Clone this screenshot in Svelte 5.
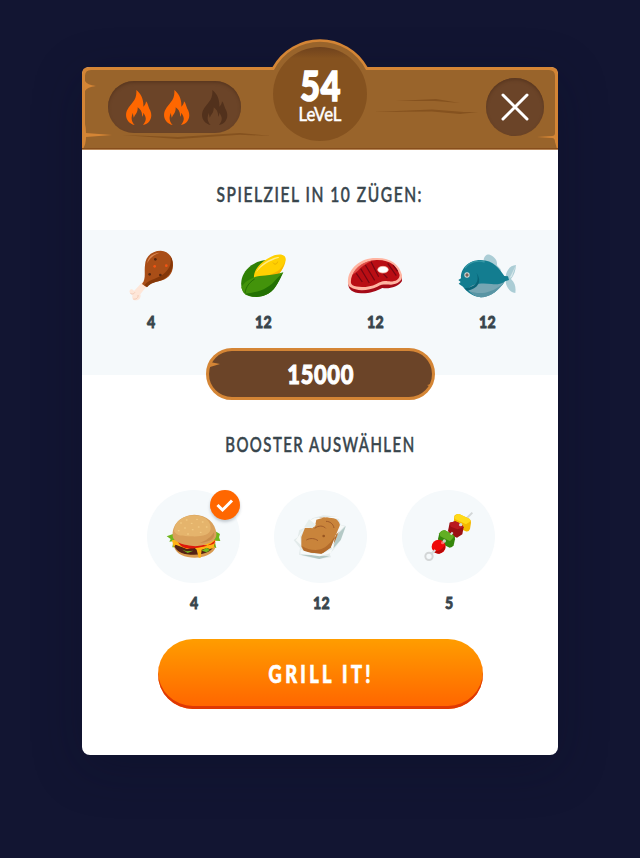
<script>
  const goals = [
    { icon: 'drumstick', box: '24 30 198 180', count: 4 },
    { icon: 'corn', box: '360 30 198 180', count: 12 },
    { icon: 'steak', box: '21 30 198 180', count: 12 },
    { icon: 'fish', box: '357 30 198 180', count: 12 }
  ];
  const boosters = [
    { icon: 'burger', box: '20 28 279 279', count: 4, selected: true },
    { icon: 'potato', box: '28 28 279 279', count: 12 },
    { icon: 'skewer', box: '20 28 279 279', count: 5 }
  ];
  const flames = [true, true, false];
</script>

{#snippet food(name)}
  {#if name === 'drumstick'}
    <path d="M98 140L72 168C66 158 56 164 59 172C60 178 66 178 68 179C64 188 69 197 78 196C88 196 94 188 91 178L110 154Z" fill="#fee6d8" />
    <path d="M61 174C65 180 72 176 75 172M70 192C78 194 86 188 84 180" fill="none" stroke="#f3cbb7" stroke-width="3" />
    <path d="M105 91C106 64 126 47 152 47C176 48 190 68 189 91C189 119 171 135 145 139C126 143 119 145 110 157L96 147C109 131 102 111 105 91Z" fill="#a94e17" />
    <path d="M181 62C196 88 187 118 158 134C142 141 123 142 112 156L103 151C119 130 145 133 164 114C181 98 185 82 181 62Z" fill="#853708" />
    <path d="M112 85C113 66 130 53 149 53C127 61 118 73 112 85Z" fill="#d98550" />
    <circle cx="136" cy="73" r="4" fill="#58280f" /><circle cx="119" cy="118" r="4" fill="#58280f" /><circle cx="151" cy="120" r="4" fill="#58280f" />
    <circle cx="134" cy="94" r="4" fill="#f45412" /><circle cx="169" cy="92" r="4" fill="#f45412" />
  {:else if name === 'corn'}
    <path d="M399 170C386 143 397 111 424 91C440 80 456 76 472 75L432 145L409 181Z" fill="#2f8004" />
    <path d="M432 130C429 102 459 74 493 61C512 55 529 59 527 75C525 96 507 122 488 134L432 139Z" fill="#ffd001" />
    <path d="M527 69C523 96 504 112 476 121C460 124 445 128 432 133L443 146L488 134C507 122 524 96 527 69Z" fill="#f9b200" />
    <path d="M439 112C445 94 469 76 493 68C506 64 510 66 505 69C480 77 454 91 439 112Z" fill="#ffec85" />
    <path d="M394 158C400 143 424 126 448 123C472 121 498 119 520 112C508 134 500 160 477 175C454 190 416 190 401 173Z" fill="#43930b" />
    <path d="M520 112C508 134 500 160 477 175C454 190 422 188 405 176C444 173 478 160 500 131Z" fill="#237103" />
    <path d="M405 174C408 155 418 142 434 132" fill="none" stroke="#246e04" stroke-width="3" />
    <path d="M489 83C495 91 501 87 503 80" stroke="#e8af00" stroke-width="3" fill="none" />
  {:else if name === 'steak'}
    <path d="M40 145C39 164 52 174 78 175C102 176 125 168 142 159C162 162 190 157 201 138L200 124L39 133Z" fill="#a50b18" />
    <path d="M39 134C42 101 75 69 122 69C166 67 193 88 201 120C203 138 188 147 168 149C149 149 142 147 127 155C100 168 64 169 47 157C39 151 38 145 39 134Z" fill="#ffb5a2" />
    <path d="M48 137C50 107 83 76 125 75C166 74 187 94 194 120C193 136 178 141 159 139C142 136 137 141 124 147C100 159 66 158 53 151C48 147 47 142 48 137Z" fill="#b90e14" />
    <path d="M64 115L82 141M77 101L103 144M91 90L119 136M108 80L131 125M158 85L184 122M145 116L157 129M174 90L188 109" stroke="#760712" stroke-width="3.5" />
    <path d="M53 119C62 94 88 79 111 77C92 85 77 96 69 107Z" fill="#e95c52" opacity=".8" />
    <ellipse cx="144" cy="104" rx="16" ry="10" fill="#fff" stroke="#f9b49f" stroke-width="2" />
  {:else if name === 'fish'}
    <path d="M446 75C447 63 456 57 464 59C479 65 488 76 486 91L497 103V116Z" fill="#abcdd5" />
    <path d="M512 124C515 103 527 91 543 90C542 107 537 121 528 132C541 144 543 158 541 174C523 172 513 153 512 140Z" fill="#abcdd5" />
    <path d="M523 130C529 119 535 105 543 90L531 125Z" fill="#d4e6e9" />
    <path d="M370 135L378 130C376 100 401 75 437 75C475 75 495 103 508 123L519 124L522 135L510 139C493 165 467 186 438 187C407 184 390 163 384 155L371 146L377 141Z" fill="#137d90" />
    <path d="M397 163C411 145 441 143 470 147C486 149 497 147 508 140C490 167 467 186 438 187C420 184 407 175 397 163Z" fill="#76a6b3" />
    <path d="M404 169C435 180 468 174 500 149C481 175 459 186 437 187C422 185 413 179 404 169Z" fill="#5995a4" />
    <path d="M425 114C434 140 423 156 389 160L396 167C430 161 442 140 425 114Z" fill="#086477" />
    <path d="M390 99C405 78 432 75 449 81" fill="none" stroke="#3597a5" stroke-width="4" />
    <circle cx="396" cy="120" r="8" fill="#d5dcda" /><circle cx="396" cy="120" r="5" fill="#776258" />
  {:else if name === 'burger'}
    <path d="M98 160L79 167L91 175L87 183L99 182L96 200L228 202L223 180L240 181L236 170L239 160L224 151Z" fill="#70b61c" />
    <path d="M101 198C112 242 212 242 226 199Z" fill="#d99b50" />
    <path d="M98 180C101 216 132 222 161 222C193 222 222 211 225 184Z" fill="#542215" />
    <path d="M95 178L100 200L106 192L126 200L141 206L160 199L169 207L175 231L181 231L184 207L200 202L208 205L220 202L226 178Z" fill="#ffb313" />
    <path d="M108 205L117 198L138 206L160 202L166 214L134 219Z" fill="#542215" />
    <path d="M113 183C121 203 145 206 166 202C184 200 211 195 225 177L222 188C210 195 200 195 187 192L126 188Z" fill="#df170a" />
    <path d="M126 207L139 212L159 210L142 217ZM184 210L199 201L209 208L199 215Z" fill="#70b61c" />
    <path d="M97 163C96 127 126 103 162 102C199 102 226 128 228 158C231 184 198 194 165 197C131 193 96 186 97 163Z" fill="#d9a05b" />
    <path d="M101 151C102 122 128 105 161 104C191 105 212 119 211 143C211 166 179 168 153 167C127 166 109 167 101 151Z" fill="#e5b46c" />
    <path d="M178 187C196 181 213 169 221 155C225 171 214 184 178 187Z" fill="#c88c4b" />
    <g fill="#f2ca84">
      {#each [[122,127],[139,118],[154,128],[170,116],[187,124],[199,139],[175,139],[157,147],[134,142],[115,150],[143,160],[181,155]] as [x, y]}
        <ellipse cx={x} cy={y} rx="3" ry="2" />
      {/each}
    </g>
  {:else if name === 'potato'}
    <path d="M145 112L176 104L221 108L228 132L244 136L229 177L209 204L195 220L199 230L164 235L133 230L103 222L106 202L87 178L99 170L104 148L117 143L132 123Z" fill="#e3ebeb" />
    <path d="M108 222L153 224L194 227L164 235ZM214 165L243 137L228 178L206 203Z" fill="#b4c9c6" />
    <path d="M150 117C164 109 189 105 209 113C226 119 232 141 220 158C217 171 207 188 198 199L172 219L119 214L110 198V169L121 141L149 137Z" fill="#c9843b" />
    <path d="M112 196C130 208 158 212 175 203C191 195 206 177 216 157C216 179 205 194 197 202L172 219L119 214Z" fill="#b36b2b" />
    <path d="M184 122C197 122 206 131 208 142M125 178C137 171 151 173 160 180M150 143C161 134 176 134 183 143" fill="none" stroke="#955125" stroke-width="2.5" />
    <circle cx="177" cy="166" r="4" fill="#995621" />
    <path d="M149 113L221 107L226 115L181 110L155 117L151 137L134 142L118 141L133 121Z" fill="#f8faf9" />
    <path d="M133 116L154 132L143 143L119 138Z" fill="#e6eeec" />
    <path d="M119 143L106 166L109 193L93 179ZM108 207L146 219L170 220L204 204L199 217L165 227L135 222L107 219ZM226 133L239 137L211 165L205 206L199 199Z" fill="#f7faf9" />
  {:else}
    <path d="M107 220L231 96" stroke="#d3d6d7" stroke-width="6" />
    <circle cx="101" cy="227" r="11" fill="none" stroke="#d3d6d7" stroke-width="6" />
    <path d="M177 105Q184 97 193 101L222 114Q228 119 227 126L224 145Q220 155 211 152L181 138Q174 135 175 128Z" fill="#f5b900" />
    <path d="M177 108Q184 97 193 101L222 114Q228 119 221 125L212 131L180 116Z" fill="#ffda18" />
    <path d="M163 126L180 122L198 130L205 140L201 161L185 171L167 164L158 151Z" fill="#9b1013" />
    <path d="M163 126L180 122L198 130L205 140L187 146L166 138Z" fill="#b91a20" />
    <path d="M132 158Q139 147 149 149L173 162Q180 167 179 176L175 194Q171 201 163 201L134 187Q127 182 128 174Z" fill="#35870c" />
    <path d="M132 158Q139 147 149 149L173 162Q178 166 172 173L164 182L135 167Z" fill="#62af24" />
    <circle cx="130" cy="198" r="21" fill="#ef0909" />
    <path d="M113 211Q134 216 149 194Q153 213 132 219Q119 219 113 211Z" fill="#b80908" />
    <circle cx="142" cy="186" r="5" fill="#ff6c67" />
    <circle cx="196" cy="132" r="5" fill="#d5d8d8" /><circle cx="147" cy="181" r="5" fill="#c6d1bd" />
    <path d="M111 217L120 208M166 162L172 155" stroke="#d9dddd" stroke-width="6" />
  {/if}
{/snippet}

<main>
  <section class="card">
    <header>
      <svg class="wood" viewBox="82 39 476 111" aria-hidden="true">
        <defs>
          <linearGradient id="rim" x1="0" y1="0" x2="0" y2="1"><stop offset="0" stop-color="#6f421d" /><stop offset=".12" stop-color="#85521f" /></linearGradient>
        </defs>
        <path d="M82 149.5V74Q82 67 89 67H272.5A54.5 54.5 0 0 1 367.5 67H551Q558 67 558 74V149.5Z" fill="#d48535" />
        <path d="M83 149Q86 144 86 137L112 135L86 133Q86 128 85 124V91Q87 87 96 86Q87 85 85 81V76Q85 70 91 70H274A51.5 51.5 0 0 1 366 70H549Q555 70 555 76V133Q555 136 552 136L537 137L552 138Q555 138 555 142L557 149Z" fill="#99642b" />
        <path d="M82 148.8H558" stroke="#874e1c" stroke-width="1.6" />
        <path d="M122 135L178 137L240 133L271 136L240 134.8L178 139ZM396 101L436 99L460 103L435 101ZM373 112L432 109.5L464 112L478 112L460 114L432 111.5Z" fill="#85521f" />
        <circle cx="320" cy="94" r="47" fill="url(#rim)" />
      </svg>
      <div class="rating">
        {#each flames as lit}
          <svg class:lit viewBox="0 0 76 105"><path d="M31 0C44 10 54 28 52 50C57 46 60 40 60 34C66 40 66 48 70 56C82 74 76 100 51 105C62 92 62 82 52 68C52 76 50 79 48 80C50 68 44 58 35 52C36 62 32 70 27 76C25 80 24 81 24 84C22 78 21 74 21 68C14 82 16 96 26 105C2 100-6 76 5 58C14 40 34 32 31 0Z" /></svg>
        {/each}
      </div>
      <div class="level"><strong>54</strong><span>LeVeL</span></div>
      <button class="close" aria-label="Schließen">
        <svg viewBox="0 0 28 28"><path d="M2 2L26 26M26 2L2 26" /></svg>
      </button>
    </header>

    <h2 class="goal-title"><span>SPIELZIEL IN 10 ZÜGEN:</span></h2>
    <div class="goals">
      {#each goals as goal}
        <div class="goal">
          <svg viewBox={goal.box}>{@render food(goal.icon)}</svg>
          <b>{goal.count}</b>
        </div>
      {/each}
    </div>
    <div class="score">
      <svg viewBox="0 0 229 52" aria-hidden="true">
        <rect x="1.5" y="1.5" width="226" height="49" rx="24.5" fill="#6b4428" stroke="#d48535" stroke-width="3" />
        <path d="M4 14L14 16L4 19ZM226 36L221 37L225 39Z" fill="#d48535" />
      </svg>
      <strong>15000</strong>
    </div>

    <h2 class="booster-title"><span>BOOSTER AUSWÄHLEN</span></h2>
    <div class="boosters">
      {#each boosters as booster}
        <div class="booster">
          <div class="dish">
            <svg viewBox={booster.box}>{@render food(booster.icon)}</svg>
            {#if booster.selected}
              <span class="check"><svg viewBox="0 0 30 30"><path d="M7.5 15L12.5 20L22 10.5" /></svg></span>
            {/if}
          </div>
          <b>{booster.count}</b>
        </div>
      {/each}
    </div>
    <button class="play"><span>GRILL IT!</span></button>
  </section>
</main>

<style>
  :global(body) { background: #121532; }
  main {
    box-sizing: border-box;
    height: 858px;
    padding: 67px 82px 0;
    overflow: hidden;
    font-family: Lato, 'Open Sans', sans-serif;
    color: #38454c;
  }
  svg { display: block; }
  button { border: 0; padding: 0; font: inherit; }
  .card {
    display: flex;
    flex-direction: column;
    align-items: center;
    width: 476px;
    height: 688px;
    border-radius: 8px;
    background: #fff;
    box-shadow: 0 12px 50px rgba(10, 13, 35, .3);
  }
  header {
    position: relative;
    display: flex;
    justify-content: space-between;
    align-items: center;
    box-sizing: border-box;
    width: 476px;
    height: 82.5px;
    padding: 0 14px 2px 26px;
    color: #fff;
  }
  .wood { position: absolute; left: 0; top: -28px; width: 476px; height: 111px; }
  .rating {
    position: relative;
    display: flex;
    align-items: center;
    justify-content: center;
    gap: 12.6px;
    box-sizing: border-box;
    width: 133px;
    height: 52px;
    padding-left: 5px;
    border-radius: 26px;
    background: #6b4428;
    box-shadow: inset 0 2px 3px #5b3820;
  }
  .rating svg { width: 25.3px; height: 35px; fill: #52311c; }
  .rating svg.lit { fill: #ff6700; }
  .level {
    position: absolute;
    left: 191px;
    top: -20px;
    display: flex;
    flex-direction: column;
    align-items: center;
    width: 94px;
    height: 94px;
    padding-top: 21px;
    box-sizing: border-box;
  }
  .level strong {
    font-size: 41px;
    line-height: 36px;
    font-weight: 900;
    letter-spacing: 1px;
    margin-right: -1px;
    -webkit-text-stroke: 1.6px #fff;
    transform: scaleX(.83);
  }
  .level span {
    font-size: 19.5px;
    line-height: 18px;
    margin-top: 1px;
    -webkit-text-stroke: .5px #fff;
    transform: scaleX(.86);
  }
  .close {
    position: relative;
    display: grid;
    place-items: center;
    width: 58px;
    height: 58px;
    border-radius: 50%;
    background: #6b4428;
    box-shadow: inset 0 2px 3px #5b3820;
  }
  .close svg { width: 28px; height: 28px; fill: none; stroke: #fff; stroke-width: 3; stroke-linecap: round; }
  h2 {
    display: flex;
    align-items: center;
    justify-content: center;
    box-sizing: border-box;
    margin: 0;
    font-size: 20.5px;
    font-weight: 500;
    letter-spacing: 2px;
    white-space: nowrap;
    -webkit-text-stroke: .5px #38454c;
  }
  .goal-title { height: 80px; padding-top: 9px; }
  .goal-title span { transform: scaleX(.76); }
  .goals {
    display: grid;
    grid-template-columns: repeat(4, 112px);
    box-sizing: border-box;
    width: 476px;
    height: 145px;
    padding: 15.5px 15px 0 13px;
    background: #f5f9fb;
  }
  .goal, .booster { display: flex; flex-direction: column; align-items: center; }
  .goal > svg { width: 66px; height: 60px; }
  b {
    font-size: 17.2px;
    line-height: 20px;
    font-weight: 900;
    letter-spacing: .6px;
    margin-right: -.6px;
    -webkit-text-stroke: .8px #38454c;
    transform: scaleX(.82);
  }
  .goal b { margin-top: 7px; }
  .score {
    position: relative;
    display: grid;
    place-items: center;
    width: 229px;
    height: 52px;
    margin-top: -26.5px;
    margin-left: 1px;
    color: #fff;
  }
  .score > * { grid-area: 1 / 1; }
  .score svg { width: 229px; height: 52px; }
  .score strong {
    position: relative;
    font-size: 26px;
    font-weight: 900;
    letter-spacing: .8px;
    margin-left: 1px;
    -webkit-text-stroke: 1px #fff;
    transform: scaleX(.84);
  }
  .booster-title { height: 89.5px; padding-bottom: 1px; }
  .booster-title span { transform: scaleX(.73); }
  .boosters { display: flex; gap: 34.5px; margin-left: 1px; }
  .dish { position: relative; width: 93px; height: 93px; border-radius: 50%; background: #f5f9fb; }
  .dish > svg { width: 93px; height: 93px; }
  .check {
    position: absolute;
    left: 63px;
    top: 0;
    width: 30px;
    height: 30px;
    border-radius: 50%;
    background: #ff6700;
    box-shadow: 0 2px 3px rgba(40, 60, 80, .25);
  }
  .check path { fill: none; stroke: #fff; stroke-width: 3; }
  .booster b { margin-top: 10.5px; margin-left: 1px; }
  .play {
    width: 325px;
    height: 70px;
    margin-top: 25.5px;
    margin-left: 1px;
    border-radius: 35px;
    background: linear-gradient(#ff9d00, #ff6400);
    box-shadow: inset 0 -3px 0 #df3803;
    color: #fff;
    font-size: 24px;
    font-weight: 900;
    letter-spacing: 4.4px;
  }
  .play span { display: inline-block; margin-left: 2px; transform: scaleX(.76); -webkit-text-stroke: .7px #fff; }
</style>
